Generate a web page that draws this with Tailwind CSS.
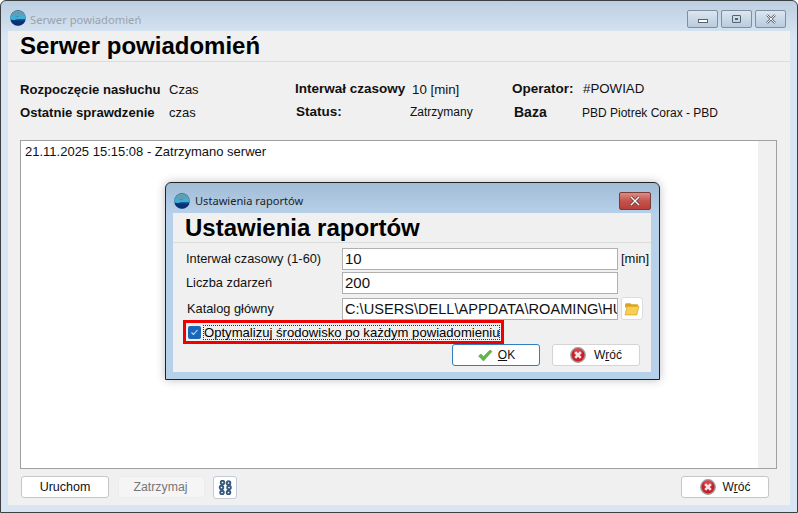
<!DOCTYPE html>
<html><head><meta charset="utf-8"><script src="https://cdn.jsdelivr.net/npm/@tailwindcss/browser@4"></script></head>
<body class="bg-white overflow-hidden font-['Liberation_Sans',Arial,sans-serif]">
<svg class="absolute w-0 h-0"><defs>
<g id="logo"><circle cx="8" cy="8" r="7.8" fill="#12428c"/><path d="M.6 6A7.8 7.8 0 0 1 15.4 6Z" fill="#5f9fb5"/><path d="M.3 6C4 4.8 6 7 9 6S13 5.2 15.7 6L15.8 9C12 10 9 8.5 6 9.5S2 10 .2 9Z" fill="#3fb0d2"/><path d="M.8 11C5 10 11 12 15.2 11L14 12.8A7.8 7.8 0 0 1 2 12.8Z" fill="#0b3272"/></g>
<g id="x"><circle cx="8" cy="8" r="7.2" fill="#c8202b" stroke="#9a9a9a" stroke-width="1.4"/><circle cx="8" cy="5" r="4" fill="#e8545c" opacity=".6"/><path d="M5.2 5.2l5.6 5.6M10.8 5.2l-5.6 5.6" stroke="#f5e5e5" stroke-width="2.6"/></g>
</defs></svg>

<div class="w-[798px] h-[513px] flex flex-col border border-[#3d4043] rounded-t-md overflow-hidden bg-gradient-to-b from-[#bccfe1] from-0% to-[#d9e5f2] to-[7%]">
  <!-- title bar -->
  <div class="h-[30px] shrink-0 flex items-start pl-[9px] pr-[11px] pt-[9px] gap-[4px]">
    <svg class="w-[16px] h-[16px]" viewBox="0 0 16 16"><use href="#logo"/></svg>
    <span class="text-[11.2px] leading-[20px] text-[#9aa3ad] font-['Noto_Sans','Liberation_Sans',sans-serif]">Serwer powiadomień</span>
    <div class="ml-auto flex gap-[3px]">
      <div class="w-[31px] h-[18px] border border-[#7f8fa1] rounded-[2px] bg-gradient-to-b from-[#dbe6f1] to-[#b9cbdd] flex items-center justify-center"><div class="w-[10px] h-[4px] mt-[4px] border border-[#58606b] bg-white"></div></div>
      <div class="w-[31px] h-[18px] border border-[#7f8fa1] rounded-[2px] bg-gradient-to-b from-[#dbe6f1] to-[#b9cbdd] flex items-center justify-center"><div class="w-[9px] h-[8px] border border-[#58606b] rounded-[1px] flex items-center justify-center"><div class="w-[3px] h-[2px] bg-[#58606b]"></div></div></div>
      <div class="w-[31px] h-[18px] border border-[#7f8fa1] rounded-[2px] bg-gradient-to-b from-[#dbe6f1] to-[#b9cbdd] flex items-center justify-center"><svg class="w-[12px] h-[10px]" viewBox="0 0 12 10"><path d="M2 1l8 8M10 1l-8 8" stroke="#5c6672" stroke-width="2.4"/><path d="M2 1l8 8M10 1l-8 8" stroke="#f2f5f8" stroke-width="1"/></svg></div>
    </div>
  </div>
  <!-- client -->
  <div class="mx-[7px] mb-[7px] h-[474px] bg-[#f0f0f0] flex flex-col">
    <div class="h-[31px] shrink-0 border-b border-[#dcdcdc] pl-[12px] text-[24px] leading-[30px] font-bold text-black">Serwer powiadomień</div>
    <div class="pt-[16px] pl-[12px] grid grid-cols-[149px_126px_117px_100px_1fr] auto-rows-[23px] items-center text-[13px] text-[#111]">
      <span class="font-bold text-[13.1px]">Rozpoczęcie nasłuchu</span><span>Czas</span><span class="font-bold text-[13.5px]">Interwał czasowy</span><span class="text-[13.3px]">10 [min]</span>
      <div class="flex"><span class="font-bold text-[13.5px] w-[71px]">Operator:</span><span class="text-[13.3px]">#POWIAD</span></div>
      <span class="font-bold text-[13.1px]">Ostatnie sprawdzenie</span><span>czas</span><span class="font-bold text-[13.5px] pl-px">Status:</span><span class="text-[12px] -ml-[2px] -mt-[2px]">Zatrzymany</span>
      <div class="flex items-center"><span class="font-bold text-[14px] w-[68px] ml-[2px]">Baza</span><span class="text-[12px]">PBD Piotrek Corax - PBD</span></div>
    </div>
    <!-- log -->
    <div class="mt-[16px] ml-[12px] w-[757px] h-[329px] border border-[#a0a0a0] bg-white flex shrink-0">
      <div class="flex-1 pl-[4px] pt-[3px] text-[13px] leading-[16px] text-[#111]">21.11.2025 15:15:08 - Zatrzymano serwer</div>
      <div class="w-[18px] bg-[#f0f0f0]"></div>
    </div>
    <!-- footer -->
    <div class="mt-[7px] pl-[13px] pr-[21px] flex items-start text-[12.5px]">
      <div class="w-[88px] h-[22px] border border-[#c6c6c6] rounded-[3px] bg-white flex items-center justify-center text-[#111]">Uruchom</div>
      <div class="ml-[9px] w-[87px] h-[22px] border border-[#ececec] rounded-[3px] bg-[#f5f5f5] flex items-center justify-center text-[#777] text-[12.3px] pr-[2px]">Zatrzymaj</div>
      <div class="ml-[8px] w-[24px] h-[23px] border border-[#c3ccd6] rounded-[3px] bg-white flex items-center justify-center">
        <svg class="w-[15px] h-[15px]" viewBox="0 0 15 15" fill="none" stroke="#35587c" stroke-width="1.9"><circle cx="4.5" cy="2.5" r="1.8"/><circle cx="10.5" cy="3" r="1.8"/><circle cx="3.5" cy="7.5" r="1.8"/><circle cx="11" cy="7.5" r="1.8"/><circle cx="4" cy="12.5" r="1.8"/><circle cx="10.5" cy="12.5" r="1.8"/></svg>
      </div>
      <div class="ml-auto w-[88px] h-[22px] border border-[#c6c6c6] rounded-[3px] bg-white flex items-center justify-center gap-[7px] text-[#111] text-[12px]">
        <svg class="w-[16px] h-[16px]" viewBox="0 0 16 16"><use href="#x"/></svg><span>W<span class="underline">r</span>óć</span>
      </div>
    </div>
  </div>
</div>

<!-- dialog -->
<div class="absolute left-[165px] top-[182px] w-[495px] h-[198px] border border-[#222] rounded-t-md flex flex-col bg-gradient-to-b from-[#a3bcd6] from-0% to-[#b8d1ea] to-[16%] shadow-[0_0_10px_rgba(0,0,0,0.25)]">
  <div class="h-[30px] shrink-0 flex items-start pl-[8px] pr-[8px] pt-[9px] gap-[5px]">
    <svg class="w-[16px] h-[16px] mt-px" viewBox="0 0 16 16"><use href="#logo"/></svg>
    <span class="text-[11.1px] leading-[18px] text-[#222] font-['Noto_Sans','Liberation_Sans',sans-serif]">Ustawienia raportów</span>
    <div class="ml-auto w-[32px] h-[18px] border border-[#7a3a38] rounded-[2px] bg-gradient-to-b from-[#d98d84] via-[#c4534a] to-[#b8403a] flex items-center justify-center"><svg class="w-[14px] h-[10px]" viewBox="0 0 14 10"><path d="M3 1l8 8M11 1l-8 8" stroke="#5c2a2a" stroke-width="2.8"/><path d="M3 1l8 8M11 1l-8 8" stroke="#fff" stroke-width="1.5"/></svg></div>
  </div>
  <div class="mx-[7px] w-[478px] h-[159px] bg-[#f0f0f0] flex flex-col relative">
    <div class="h-[30px] shrink-0 border-b border-[#dcdcdc] pl-[12px] text-[24px] leading-[29px] font-bold text-black">Ustawienia raportów</div>
    <div class="flex flex-col text-[12.8px] text-[#111]">
      <div class="mt-[5px] flex items-center h-[22px] pl-[13px]"><span class="w-[156px]">Interwał czasowy (1-60)</span><div class="w-[276px] h-[22px] border border-[#b0b0b0] bg-white pl-[2px] text-[15px] leading-[20px]">10</div><span class="ml-[3px] text-[13px]">[min]</span></div>
      <div class="mt-[2px] flex items-center h-[22px] pl-[13px]"><span class="w-[156px]">Liczba zdarzeń</span><div class="w-[276px] h-[22px] border border-[#b0b0b0] bg-white pl-[2px] text-[15px] leading-[20px]">200</div></div>
      <div class="mt-[3px] flex items-center h-[23px] pl-[14px]"><span class="w-[155px] pt-[1px]">Katalog główny</span><div class="w-[276px] h-[22px] border border-[#b0b0b0] bg-white pl-[2px] text-[14.6px] leading-[20px] overflow-hidden whitespace-nowrap">C:\USERS\DELL\APPDATA\ROAMING\HU</div>
        <div class="ml-[3px] w-[22px] h-[23px] border border-[#dcdcdc] rounded-[3px] bg-white flex items-center justify-center"><svg class="w-[16px] h-[15px]" viewBox="0 0 15 14"><path d="M1 3l1-1h4l1 1h6v3H1Z" fill="#d9a520"/><path d="M1 13L3 5h11l-2 8Z" fill="#f7cf57" stroke="#d9a520" stroke-width=".7"/></svg></div>
      </div>
    </div>
    <div class="ml-[10px] w-[321px] h-[24px] border-[3px] border-[#f00000] flex items-center pl-[2px] gap-[3px]">
      <div class="w-[13px] h-[13px] rounded-[2px] bg-[#1a66b8] flex items-center justify-center shrink-0"><svg class="w-[9px] h-[9px]" viewBox="0 0 9 9" fill="none" stroke="#cfe2f5" stroke-width="1.1"><path d="M1.5 4.5l2 2 4-4.5"/></svg></div>
      <span class="text-[13.1px] leading-[13px] text-black outline-1 outline-dotted outline-[#333] whitespace-nowrap">Optymalizuj środowisko po każdym powiadomieniu</span>
    </div>
    <div class="pl-[279px] flex gap-[12px] text-[12px] text-[#111]">
      <div class="w-[88px] h-[22px] border border-[#2f7fc1] rounded-[3px] bg-white flex items-center justify-center gap-[5px]"><svg class="w-[16px] h-[13px]" viewBox="0 0 15 13"><path d="M1 7l2.5-2L6 7.5 12.5 1l2 1.5L6 12Z" fill="#63b64a" stroke="#4a9a38" stroke-width=".5"/></svg><span><span class="underline">O</span>K</span></div>
      <div class="w-[88px] h-[22px] border border-[#d4d4d4] rounded-[3px] bg-white flex items-center justify-center gap-[8px]"><svg class="w-[16px] h-[16px]" viewBox="0 0 16 16"><use href="#x"/></svg><span>W<span class="underline">r</span>óć</span></div>
    </div>
  </div>
</div>
</body></html>
